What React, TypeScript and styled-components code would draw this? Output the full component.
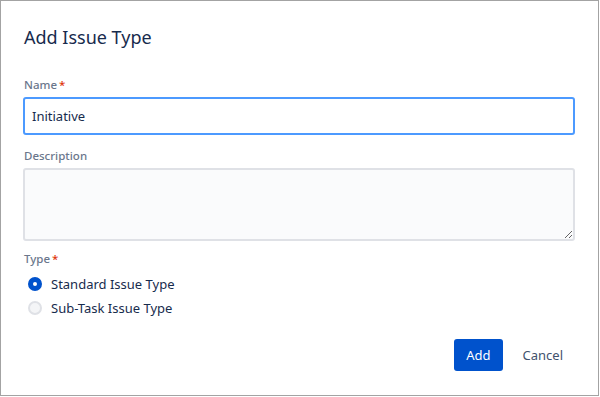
import React from "react";
import styled, { createGlobalStyle } from "styled-components";

const Global = createGlobalStyle`
  html, body { margin: 0; padding: 0; background: #ffffff; }
  body { font-family: "Noto Sans", "Open Sans", sans-serif; }
  * { box-sizing: border-box; }
`;

const Dialog = styled.div`
  width: 599px;
  height: 396px;
  border: 1px solid #a3a3a3;
  background: #ffffff;
  display: flex;
  flex-direction: column;
  padding: 0 23px 0 22px;
`;

const Title = styled.h1`
  margin: 24px 0 0 1px;
  font-size: 18px;
  line-height: 24px;
  font-weight: 400;
  color: #172b4d;
`;

const Form = styled.form`
  display: flex;
  flex-direction: column;
  margin-top: 28px;
`;

const Field = styled.div<{ $gap?: number }>`
  display: flex;
  flex-direction: column;
  margin-top: ${(p) => p.$gap ?? 0}px;
`;

const Label = styled.label`
  font-size: 11.5px;
  line-height: 16px;
  font-weight: 500;
  color: #6b778c;
  margin-bottom: 4px;
  margin-left: 1px;
`;

const Req = styled.span`
  color: #de350b;
  margin-left: 2px;
`;

const TextInput = styled.input`
  height: 38px;
  border: 2px solid #4c9aff;
  border-radius: 3px;
  background: #ffffff;
  padding: 0 7px;
  font-family: inherit;
  font-size: 13px;
  color: #172b4d;
  outline: none;
`;

const TextArea = styled.textarea`
  height: 73px;
  border: 2px solid #dfe1e6;
  border-radius: 3px;
  background: #fafbfc;
  resize: vertical;
  font-family: inherit;
  font-size: 13px;
  padding: 6px;
  outline: none;
`;

const RadioList = styled.div`
  display: flex;
  flex-direction: column;
  margin-top: 1px;
`;

const RadioRow = styled.label`
  display: flex;
  align-items: center;
  height: 24px;
  gap: 9px;
  padding-left: 5px;
  font-size: 13px;
  color: #172b4d;
`;

const RadioDot = styled.span<{ $checked?: boolean }>`
  width: 14px;
  height: 14px;
  border-radius: 50%;
  flex: none;
  display: flex;
  align-items: center;
  justify-content: center;
  background: ${(p) => (p.$checked ? "#0052cc" : "#f4f5f7")};
  border: 2px solid ${(p) => (p.$checked ? "#0052cc" : "#dfe1e6")};
  &::after {
    content: "";
    width: 4px;
    height: 4px;
    border-radius: 50%;
    background: ${(p) => (p.$checked ? "#ffffff" : "transparent")};
  }
`;

const Footer = styled.div`
  margin-top: auto;
  margin-bottom: 24px;
  display: flex;
  justify-content: flex-end;
  gap: 8px;
`;

const Button = styled.button<{ $primary?: boolean }>`
  height: 32px;
  padding: 0 12px;
  border: none;
  border-radius: 3px;
  font-family: inherit;
  font-size: 13px;
  cursor: pointer;
  background: ${(p) => (p.$primary ? "#0052cc" : "transparent")};
  color: ${(p) => (p.$primary ? "#ffffff" : "#42526e")};
`;

export default function App() {
  return (
    <>
      <Global />
      <Dialog>
        <Title>Add Issue Type</Title>
        <Form onSubmit={(e) => e.preventDefault()}>
          <Field>
            <Label>
              Name<Req>*</Req>
            </Label>
            <TextInput defaultValue="Initiative" />
          </Field>
          <Field $gap={13}>
            <Label>Description</Label>
            <TextArea />
          </Field>
          <Field $gap={10}>
            <Label>
              Type<Req>*</Req>
            </Label>
            <RadioList>
              <RadioRow>
                <RadioDot $checked />
                Standard Issue Type
              </RadioRow>
              <RadioRow>
                <RadioDot />
                Sub-Task Issue Type
              </RadioRow>
            </RadioList>
          </Field>
        </Form>
        <Footer>
          <Button $primary type="button">Add</Button>
          <Button type="button">Cancel</Button>
        </Footer>
      </Dialog>
    </>
  );
}
